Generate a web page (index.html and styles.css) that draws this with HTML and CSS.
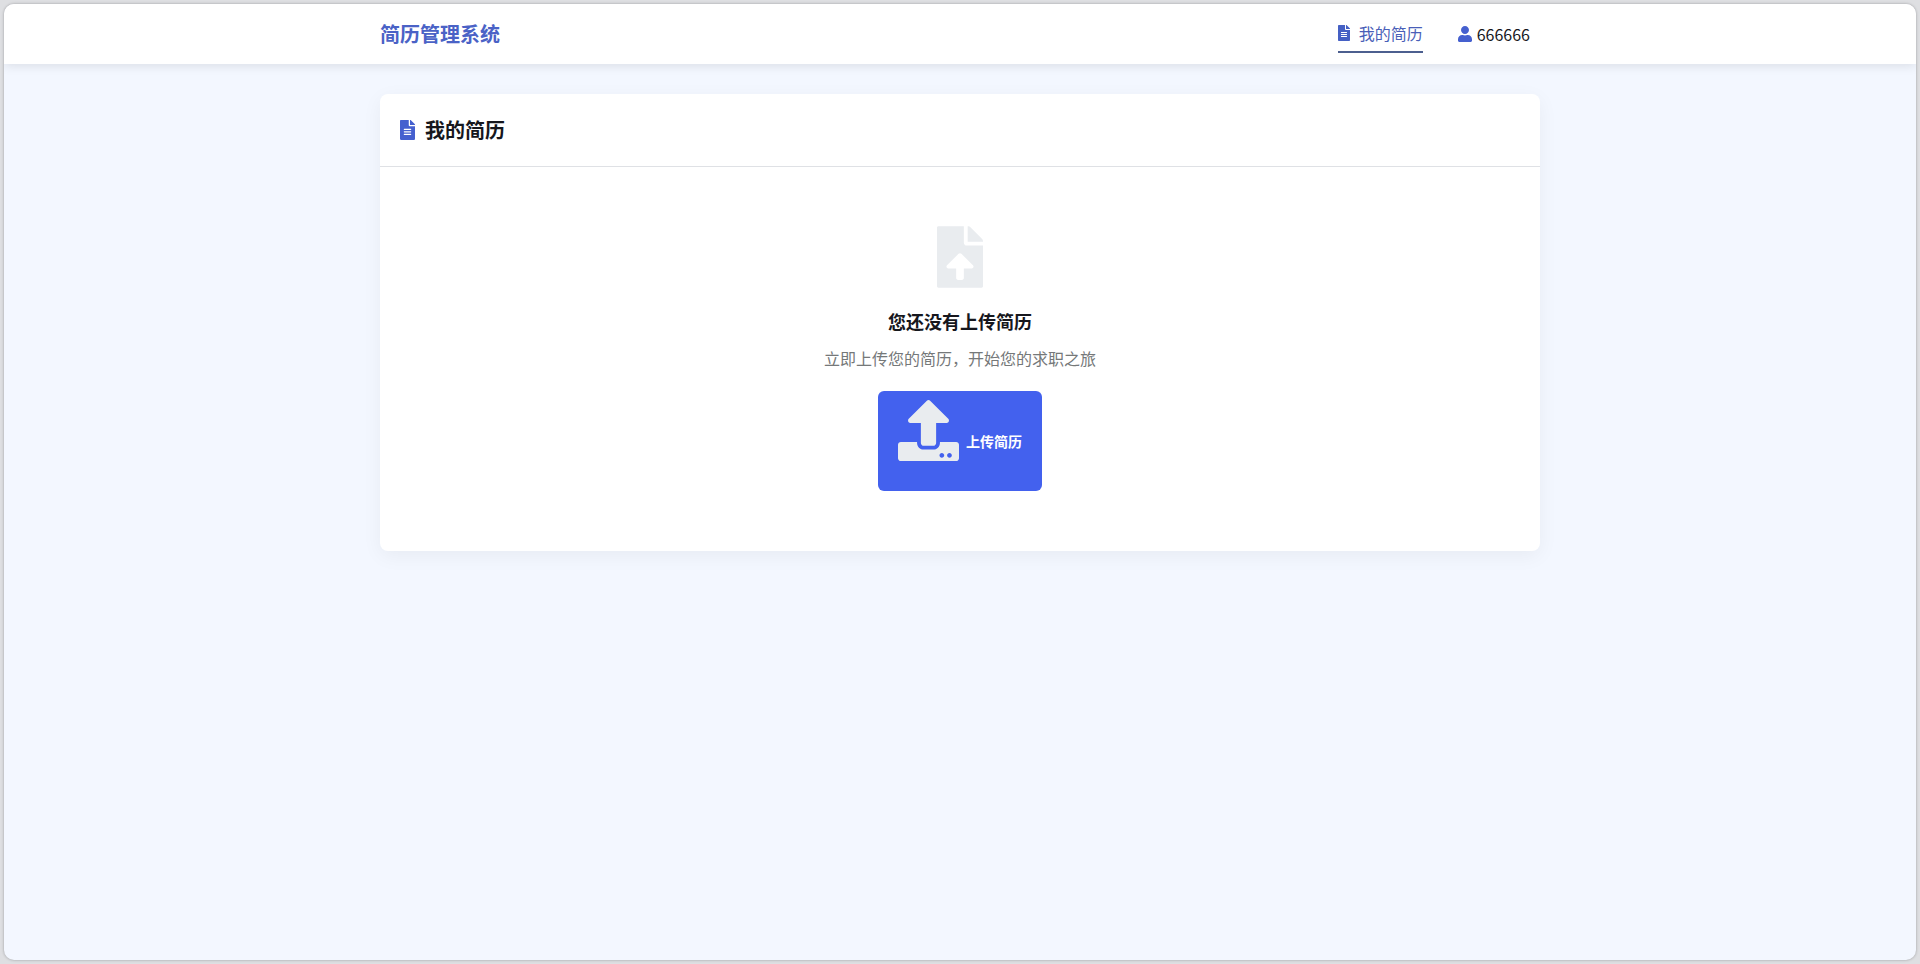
FILE: index.html
```html
<!DOCTYPE html>
<html lang="zh-CN">

<head>
    <meta charset="UTF-8">
    <meta name="viewport" content="width=device-width, initial-scale=1.0">
    <title>我的简历 - 简历管理系统</title>
    <link rel="stylesheet" href="styles.css">
</head>

<body>
    <div class="window">
        <header class="header">
            <div class="container header-inner">
                <a href="#" class="logo">简历管理系统</a>
                <nav class="nav">
                    <a href="#" class="nav-link active">
                        <svg class="icon-file" viewBox="0 0 384 512" aria-hidden="true"><path d="M224 136V0H24C10.7 0 0 10.7 0 24v464c0 13.3 10.7 24 24 24h336c13.3 0 24-10.7 24-24V160H248c-13.2 0-24-10.8-24-24zm64 236c0 6.6-5.4 12-12 12H108c-6.6 0-12-5.4-12-12v-8c0-6.6 5.4-12 12-12h168c6.6 0 12 5.4 12 12v8zm0-64c0 6.6-5.4 12-12 12H108c-6.6 0-12-5.4-12-12v-8c0-6.6 5.4-12 12-12h168c6.6 0 12 5.4 12 12v8zm0-72v8c0 6.6-5.4 12-12 12H108c-6.6 0-12-5.4-12-12v-8c0-6.6 5.4-12 12-12h168c6.6 0 12 5.4 12 12zm96-114.1v6.1H256V0h6.1c6.4 0 12.5 2.5 17 7l97.9 98c4.5 4.5 7 10.6 7 16.9z"/></svg>
                        <span>我的简历</span>
                    </a>
                    <a href="#" class="user">
                        <svg class="icon-user" viewBox="0 0 448 512" aria-hidden="true"><path d="M224 256c70.700 0 128-57.300 128-128S294.700 0 224 0 96 57.300 96 128s57.300 128 128 128zm89.600 32h-16.700c-22.200 10.200-46.900 16-72.900 16s-50.600-5.800-72.900-16h-16.700C60.200 288 0 348.200 0 422.400V464c0 26.500 21.500 48 48 48h352c26.500 0 48-21.500 48-48v-41.600c0-74.200-60.200-134.400-134.400-134.400z"/></svg>
                        <span>666666</span>
                    </a>
                </nav>
            </div>
        </header>

        <main class="container main">
            <section class="card">
                <div class="card-header">
                    <h2 class="card-title">
                        <svg class="icon-title" viewBox="0 0 384 512" aria-hidden="true"><path d="M224 136V0H24C10.7 0 0 10.7 0 24v464c0 13.3 10.7 24 24 24h336c13.3 0 24-10.7 24-24V160H248c-13.2 0-24-10.8-24-24zm64 236c0 6.6-5.4 12-12 12H108c-6.6 0-12-5.4-12-12v-8c0-6.6 5.4-12 12-12h168c6.6 0 12 5.4 12 12v8zm0-64c0 6.6-5.4 12-12 12H108c-6.6 0-12-5.4-12-12v-8c0-6.6 5.4-12 12-12h168c6.6 0 12 5.4 12 12v8zm0-72v8c0 6.6-5.4 12-12 12H108c-6.6 0-12-5.4-12-12v-8c0-6.6 5.4-12 12-12h168c6.6 0 12 5.4 12 12zm96-114.1v6.1H256V0h6.1c6.4 0 12.5 2.5 17 7l97.9 98c4.5 4.5 7 10.6 7 16.9z"/></svg>
                        <span>我的简历</span>
                    </h2>
                </div>
                <div class="empty">
                    <svg class="icon-empty" viewBox="0 0 384 512" aria-hidden="true"><path d="M224 136V0H12C5 0 0 5 0 12v488c0 7 5 12 12 12h360c7 0 12-5 12-12V160H248c-13.2 0-24-10.8-24-24zm65.200 216H224v80c0 8.800-7.200 16-16 16h-32c-8.800 0-16-7.200-16-16v-80H94.800c-14.300 0-21.400-17.300-11.300-27.400l96.400-95.700c6.700-6.600 17.400-6.600 24 0l96.400 95.700c10.200 10.100 3.100 27.400-11.100 27.400zM377 105L279.100 7c-4.500-4.500-10.600-7-17-7H256v128h128v-6.100c0-6.300-2.500-12.400-7-16.900z"/></svg>
                    <h3 class="empty-title">您还没有上传简历</h3>
                    <p class="empty-text">立即上传您的简历，开始您的求职之旅</p>
                    <button type="button" class="btn">
                        <svg class="icon-upload" viewBox="0 0 512 512" aria-hidden="true"><path d="M296 384h-80c-13.300 0-24-10.700-24-24V192h-87.700c-17.800 0-26.700-21.500-14.100-34.100L242.300 5.700c7.500-7.500 19.800-7.500 27.300 0l152.200 152.200c12.600 12.600 3.700 34.100-14.100 34.100H320v168c0 13.300-10.700 24-24 24zm216-8v112c0 13.300-10.700 24-24 24H24c-13.300 0-24-10.700-24-24V376c0-13.300 10.700-24 24-24h136v8c0 30.900 25.100 56 56 56h80c30.900 0 56-25.100 56-56v-8h136c13.300 0 24 10.700 24 24zm-124 88c0-11-9-20-20-20s-20 9-20 20 9 20 20 20 20-9 20-20zm64 0c0-11-9-20-20-20s-20 9-20 20 9 20 20 20 20-9 20-20z"/></svg>
                        <span>上传简历</span>
                    </button>
                </div>
            </section>
        </main>
    </div>
</body>

</html>
```
FILE: styles.css
```css
* {
    margin: 0;
    padding: 0;
    box-sizing: border-box;
}

body {
    display: flex;
    min-height: 100vh;
    padding: 4px;
    background-color: #dedfe2;
    color: #16171d;
    font-family: "Noto Sans CJK SC", sans-serif;
    font-size: 16px;
    line-height: 24px;
}

a {
    color: inherit;
    text-decoration: none;
}

svg {
    fill: currentColor;
    flex-shrink: 0;
}

.window {
    flex: 1;
    overflow: hidden;
    border-radius: 10px;
    background-color: #f3f7ff;
    box-shadow: 0 0 3px rgba(0, 0, 0, 0.3);
}

.container {
    width: 100%;
    max-width: 1200px;
    margin: 0 auto;
    padding: 0 20px;
}

.header {
    background-color: #fff;
    box-shadow: 0 2px 10px rgba(0, 0, 0, 0.1);
}

.header-inner {
    display: flex;
    justify-content: space-between;
    align-items: center;
    height: 60px;
}

.logo {
    color: #4a62c6;
    font-size: 20px;
    font-weight: bold;
}

.nav {
    display: flex;
    align-items: center;
    gap: 35px;
    padding-right: 10px;
}

.nav-link {
    display: flex;
    align-items: center;
    gap: 9px;
    padding: 6px 0;
    border-bottom: 2px solid transparent;
}

.nav-link.active {
    color: #4a5fb8;
    border-bottom-color: #4c5f8f;
}

.icon-file {
    width: 12px;
    height: 16px;
    color: #4560c4;
}

.user {
    display: flex;
    align-items: center;
    gap: 5px;
}

.icon-user {
    width: 14px;
    height: 16px;
    color: #4560cf;
}

.main {
    padding-top: 30px;
}

.card {
    border-radius: 8px;
    background-color: #fff;
    box-shadow: 0 5px 20px rgba(0, 0, 0, 0.05);
}

.card-header {
    padding: 20px;
    border-bottom: 1px solid #dfe1e5;
}

.card-title {
    display: flex;
    align-items: center;
    gap: 10px;
    font-size: 20px;
    line-height: 32px;
}

.icon-title {
    width: 15px;
    height: 20px;
    color: #4560cf;
}

.empty {
    display: flex;
    flex-direction: column;
    align-items: center;
    padding: 59px 20px 60px;
}

.icon-empty {
    width: 46px;
    height: 62px;
    margin-bottom: 20px;
    color: #e9ecef;
}

.empty-title {
    margin-bottom: 12px;
    font-size: 18px;
    line-height: 26px;
}

.empty-text {
    margin-bottom: 21px;
    color: #757879;
}

.btn {
    display: flex;
    align-items: center;
    gap: 7px;
    padding: 9px 20px 10px;
    border: none;
    border-radius: 6px;
    background-color: #4361ee;
    color: #fff;
    font-family: inherit;
    font-size: 14px;
    font-weight: bold;
    cursor: pointer;
}

.icon-upload {
    width: 61px;
    height: 61px;
    margin-bottom: 20px;
    color: #e9ecef;
}
```
